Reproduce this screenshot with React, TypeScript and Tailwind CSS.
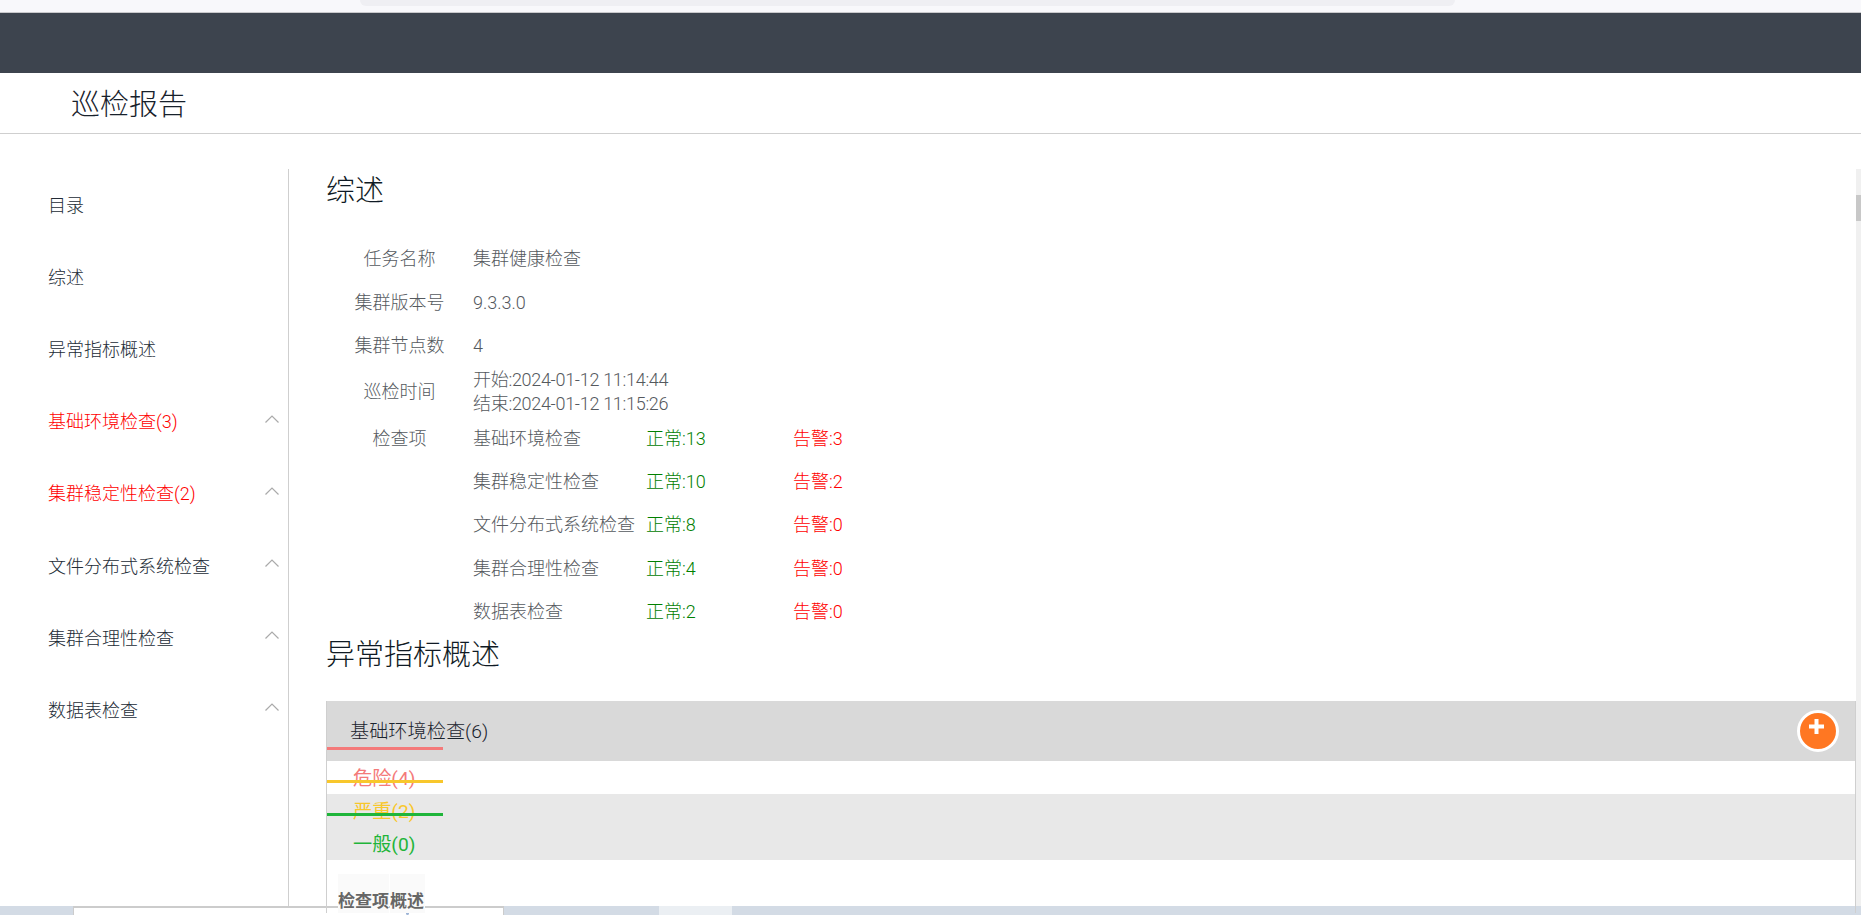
const menu = [
  { label: "目录" },
  { label: "综述" },
  { label: "异常指标概述" },
  { label: "基础环境检查(3)", red: true, arrow: true },
  { label: "集群稳定性检查(2)", red: true, arrow: true },
  { label: "文件分布式系统检查", arrow: true },
  { label: "集群合理性检查", arrow: true },
  { label: "数据表检查", arrow: true },
];

const checks = [
  { name: "基础环境检查", ok: 13, warn: 3 },
  { name: "集群稳定性检查", ok: 10, warn: 2 },
  { name: "文件分布式系统检查", ok: 8, warn: 0 },
  { name: "集群合理性检查", ok: 4, warn: 0 },
  { name: "数据表检查", ok: 2, warn: 0 },
];

function InfoRow({ label, value }: { label: string; value: string }) {
  return (
    <div className="flex h-[43.5px] items-center">
      <div className="w-[147px] text-center">{label}</div>
      <div>{value}</div>
    </div>
  );
}

export default function App() {
  return (
    <div className="flex h-[915px] flex-col overflow-hidden bg-white font-['Roboto','Noto_Sans_CJK_SC',sans-serif] text-[18px] font-light text-[#55595e]">
      <div className="h-[13px] shrink-0 border-b border-[#c9c9cc] bg-[#f8f8fb]">
        <div className="ml-[360px] h-[6px] w-[1095px] rounded-b-lg bg-[#efeff3]" />
      </div>
      <div className="h-[60px] shrink-0 bg-[#3d444e]" />
      <div className="flex h-[61px] shrink-0 items-center border-b border-[#cfcfcf] pl-[71px] pt-[5px] text-[29px] text-[#17212b]">
        巡检报告
      </div>

      <div className="flex min-h-0 flex-1 pt-[35px]">
        <aside className="w-[289px] shrink-0 border-r border-[#cfcfcf]">
          {menu.map((item) => (
            <div
              key={item.label}
              className={`flex h-[72.2px] items-center justify-between pl-[48px] pr-[9px] ${item.red ? "text-[#ff0000]" : "text-[#222b36]"}`}
            >
              <span>{item.label}</span>
              {item.arrow && (
                <svg width="14" height="8" viewBox="0 0 14 8" fill="none" stroke="#aaaaaa" strokeWidth="1.2" className="mb-[6px]">
                  <path d="M0.5 7.5 L7 1 L13.5 7.5" />
                </svg>
              )}
            </div>
          ))}
        </aside>

        <main className="min-w-0 flex-1 pl-[37px]">
          <h2 className="h-[42px] text-[29px] leading-[44px] text-[#0f1a24]">综述</h2>
          <div className="mt-[26px]">
            <InfoRow label="任务名称" value="集群健康检查" />
            <InfoRow label="集群版本号" value="9.3.3.0" />
            <InfoRow label="集群节点数" value="4" />
            <div className="flex h-[48px] items-center">
              <div className="w-[147px] text-center">巡检时间</div>
              <div className="leading-[23.5px] tracking-[-0.3px]">
                <div>开始:2024-01-12 11:14:44</div>
                <div>结束:2024-01-12 11:15:26</div>
              </div>
            </div>
            <div className="mt-px flex">
              <div className="flex h-[43.4px] w-[147px] items-center justify-center">检查项</div>
              <div>
                {checks.map((c) => (
                  <div key={c.name} className="flex h-[43.4px] items-center">
                    <div className="w-[173px]">{c.name}</div>
                    <div className="w-[147px] text-[#008000]">正常:{c.ok}</div>
                    <div className="text-[#ff0000]">告警:{c.warn}</div>
                  </div>
                ))}
              </div>
            </div>
          </div>

          <h2 className="h-[42px] text-[29px] leading-[44px] text-[#0f1a24]">异常指标概述</h2>

          <div className="relative mt-[26px] border-x border-[#cfcfcf] text-[19.2px]">
            <div className="flex h-[60px] items-center justify-between bg-[#d9d9d9] pl-[23px] pr-[16px] text-[#1a232d]">
              <span className="pt-[2px]">基础环境检查(6)</span>
              <div className="flex size-[42px] items-center justify-center rounded-full border-[3px] border-white bg-[#ff7722] pb-[9px] pr-[3px]">
                <svg width="15" height="15" viewBox="0 0 15 15" fill="#ffffff">
                  <rect x="5.5" y="0" width="4" height="15" />
                  <rect x="0" y="5.5" width="15" height="4" />
                </svg>
              </div>
            </div>
            <div className="h-[33px] pl-[26px] font-normal leading-[35px] text-[#f47a7a]">危险(4)</div>
            <div className="bg-[#e8e8e8] pl-[26px] font-normal leading-[33px]">
              <div className="pt-px text-[#f8c72c]">严重(2)</div>
              <div className="h-[32px] text-[#1fb53a]">一般(0)</div>
            </div>
            <span className="absolute left-0 top-[46px] h-[3px] w-[116px] bg-[#f47a7a]" />
            <span className="absolute left-0 top-[79px] h-[3px] w-[116px] bg-[#f8c72c]" />
            <span className="absolute left-0 top-[112px] h-[3px] w-[116px] bg-[#1fb53a]" />
            <div className="flex gap-px pl-[11px] pt-[14px] text-[17px] font-bold text-[#666666]">
              <div className="w-[51px] bg-[#fafafa] pt-[15px] leading-[24px]">检查项</div>
              <div className="w-[35px] bg-[#fafafa] pt-[15px] leading-[24px]">概述</div>
            </div>
          </div>
        </main>

        <div className="w-[5px] shrink-0 bg-[#f0f0f0] pt-[26px]">
          <div className="h-[26px] bg-[#c8c8c8]" />
        </div>
      </div>

      <div className="flex h-[9px] shrink-0 bg-[#d3dbe5]">
        <div className="ml-[73px] w-[431px] border-x border-t-2 border-[#cccccc] bg-white">
          <div className="ml-[332px] mt-[3px] h-[4px] w-[3px] rounded-sm bg-[#9db4d6]" />
        </div>
        <div className="ml-[155px] w-[73px] bg-[#ebeff3]" />
      </div>
    </div>
  );
}
